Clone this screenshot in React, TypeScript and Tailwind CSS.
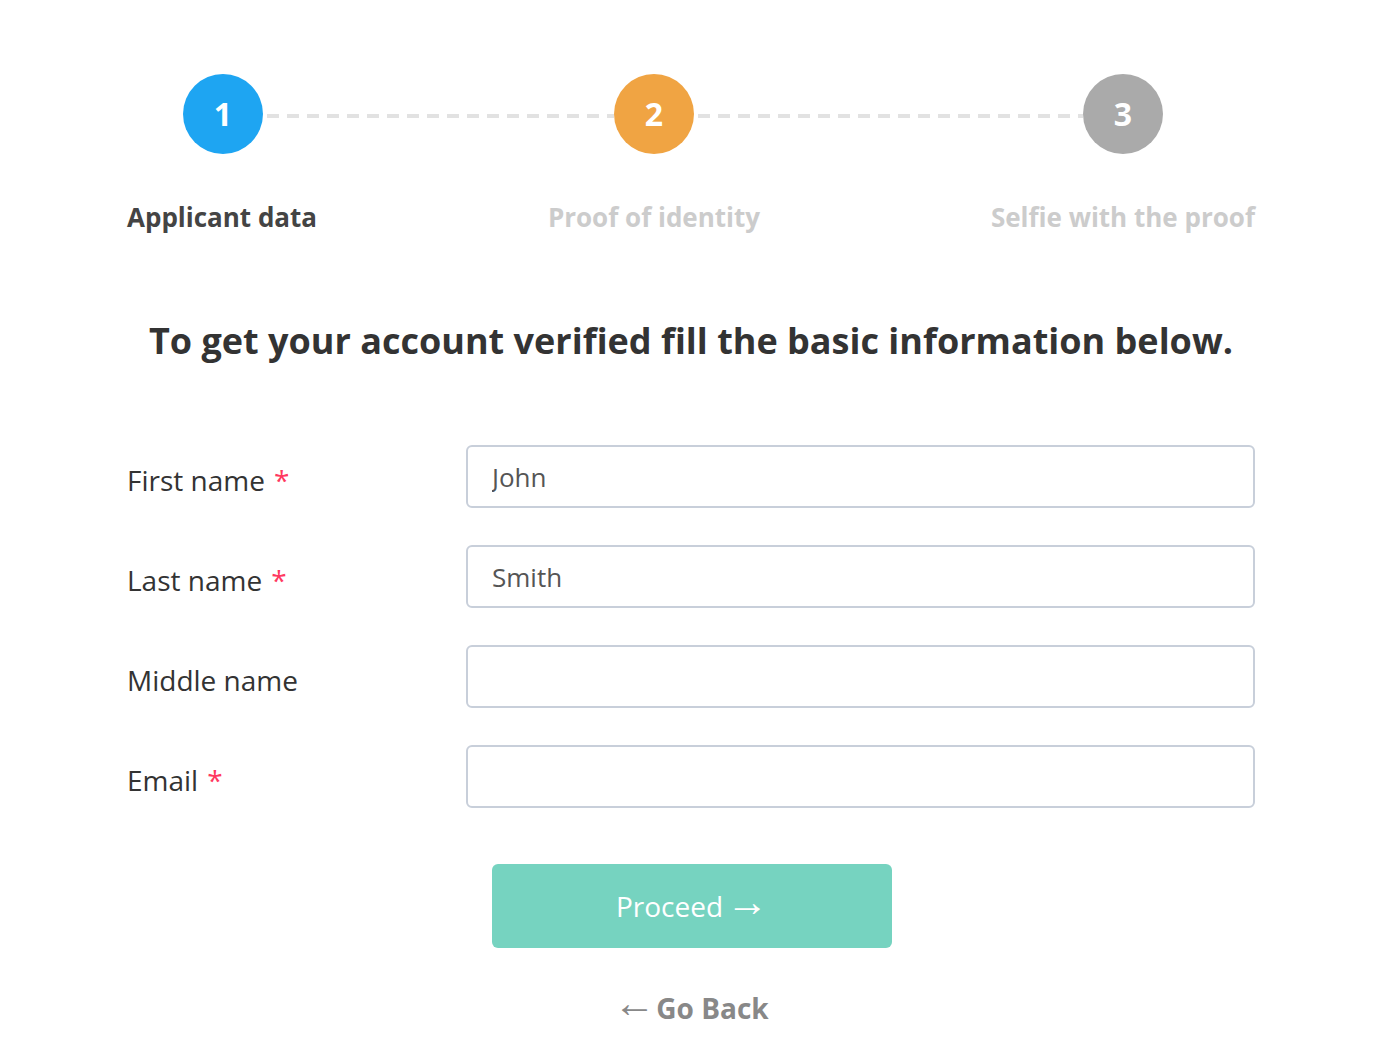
import { useState } from "react";

type Field = {
  key: string;
  label: string;
  required?: boolean;
  initial: string;
};

const fields: Field[] = [
  { key: "first", label: "First name", required: true, initial: "John" },
  { key: "last", label: "Last name", required: true, initial: "Smith" },
  { key: "middle", label: "Middle name", initial: "" },
  { key: "email", label: "Email", required: true, initial: "" },
];

export default function App() {
  const [form, setForm] = useState<Record<string, string>>(
    Object.fromEntries(fields.map((f) => [f.key, f.initial]))
  );

  return (
    <div className="min-h-screen bg-white font-['Open_Sans',sans-serif] text-[#333]">
      <div className="mx-auto w-[1128px] pt-[74px]">
        {/* stepper */}
        <div className="flex items-center pl-[56px] pr-[92px]">
          <div className="flex h-[80px] w-[80px] shrink-0 items-center justify-center rounded-full bg-[#1ea5f2] text-[32px] font-bold text-white">
            1
          </div>
          <div className="mt-[3px] h-[4px] w-[351px] bg-[repeating-linear-gradient(90deg,transparent_0_4px,#e2e2e2_4px_16px,transparent_16px_20px)]" />
          <div className="flex h-[80px] w-[80px] shrink-0 items-center justify-center rounded-full bg-[#f0a443] text-[32px] font-bold text-white">
            2
          </div>
          <div className="mt-[3px] h-[4px] flex-1 bg-[repeating-linear-gradient(90deg,transparent_0_4px,#e2e2e2_4px_16px,transparent_16px_20px)]" />
          <div className="flex h-[80px] w-[80px] shrink-0 items-center justify-center rounded-full bg-[#aaaaaa] text-[32px] font-bold text-white">
            3
          </div>
        </div>
        <div className="mt-[46px] flex justify-between text-[26px] font-bold leading-[34px]">
          <span className="text-[#444]">Applicant data</span>
          <span className="text-[#cccccc]">Proof of identity</span>
          <span className="text-[#cccccc]">Selfie with the proof</span>
        </div>

        <h1 className="mt-[83px] text-center text-[36px] font-bold leading-[48px] text-[#333]">
          To get your account verified fill the basic information below.
        </h1>

        <form className="mt-[80px]" onSubmit={(e) => e.preventDefault()}>
          <div className="flex flex-col gap-[37px]">
            {fields.map((f) => (
              <div key={f.key} className="flex items-center">
                <label className="w-[339px] pt-[7px] text-[28px] leading-[38px] text-[#333]">
                  {f.label}
                  {f.required && <span className="ml-[9px] text-[#ff3860]">*</span>}
                </label>
                <input
                  className="h-[63px] flex-1 rounded-[6px] border-2 border-[#c8cfda] bg-white px-[24px] text-[26px] text-[#555] focus:border-[#1ea5f2] focus:outline-none"
                  value={form[f.key]}
                  onChange={(e) => setForm((prev) => ({ ...prev, [f.key]: e.target.value }))}
                />
              </div>
            ))}
          </div>

          <button
            type="submit"
            className="mx-auto mt-[56px] flex h-[84px] w-[400px] translate-x-[1px] items-center justify-center rounded-[6px] bg-[#76d3c0] text-[28px] text-white"
          >
            Proceed
            <span className="-mt-[8px] ml-[3px] font-['Liberation_Sans',sans-serif] text-[42px] leading-none">→</span>
          </button>
        </form>

        <div className="mt-[42px] flex items-center justify-center text-[28px] leading-[36px] text-[#888]">
          <span className="-mt-[10px] font-['Liberation_Sans',sans-serif] text-[42px] leading-none font-normal">←</span>
          <span className="ml-[1px] font-bold">Go Back</span>
        </div>
      </div>
    </div>
  );
}
